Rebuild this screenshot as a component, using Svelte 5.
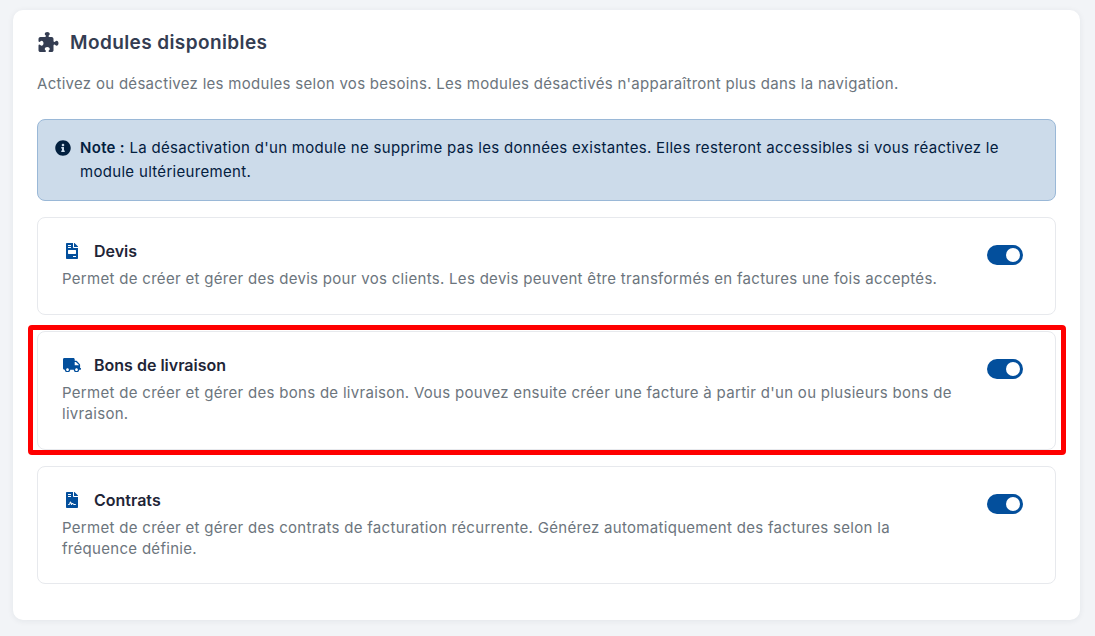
<script lang="ts">
  const modules = [
    {
      title: "Devis",
      desc: "Permet de créer et gérer des devis pour vos clients. Les devis peuvent être transformés en factures une fois acceptés.",
      viewBox: "0 0 384 512",
      path: "M377 105L279.1 7c-4.5-4.5-10.6-7-17-7H256v128h128v-6.1c0-6.3-2.5-12.4-7-16.9zM224 136V0H24C10.7 0 0 10.7 0 24v464c0 13.3 10.7 24 24 24h336c13.3 0 24-10.7 24-24V160H248c-13.2 0-24-10.8-24-24zM64 72c0-4.42 3.58-8 8-8h80c4.42 0 8 3.58 8 8v16c0 4.42-3.58 8-8 8H72c-4.42 0-8-3.58-8-8V72zm0 64c0-4.42 3.58-8 8-8h80c4.42 0 8 3.58 8 8v16c0 4.42-3.58 8-8 8H72c-4.42 0-8-3.58-8-8v-16zm256 304c0 4.42-3.58 8-8 8h-80c-4.42 0-8-3.58-8-8v-16c0-4.42 3.58-8 8-8h80c4.42 0 8 3.58 8 8v16zm0-200v96c0 8.84-7.16 16-16 16H80c-8.84 0-16-7.16-16-16v-96c0-8.84 7.16-16 16-16h224c8.84 0 16 7.16 16 16z",
      highlight: false,
    },
    {
      title: "Bons de livraison",
      desc: "Permet de créer et gérer des bons de livraison. Vous pouvez ensuite créer une facture à partir d'un ou plusieurs bons de livraison.",
      viewBox: "0 0 640 512",
      path: "M624 352h-16V243.9c0-12.7-5.1-24.9-14.1-33.9L494 110.1c-9-9-21.2-14.1-33.9-14.1H416V48c0-26.5-21.5-48-48-48H48C21.5 0 0 21.5 0 48v320c0 26.5 21.5 48 48 48h16c0 53 43 96 96 96s96-43 96-96h128c0 53 43 96 96 96s96-43 96-96h48c8.8 0 16-7.2 16-16v-32c0-8.8-7.2-16-16-16zM160 464c-26.5 0-48-21.5-48-48s21.5-48 48-48 48 21.5 48 48-21.5 48-48 48zm320 0c-26.5 0-48-21.5-48-48s21.5-48 48-48 48 21.5 48 48-21.5 48-48 48zm80-208H416V144h44.1l99.9 99.9V256z",
      highlight: true,
    },
    {
      title: "Contrats",
      desc: "Permet de créer et gérer des contrats de facturation récurrente. Générez automatiquement des factures selon la fréquence définie.",
      viewBox: "0 0 384 512",
      path: "M224 136V0H24C10.7 0 0 10.7 0 24v464c0 13.3 10.7 24 24 24h336c13.3 0 24-10.7 24-24V160H248c-13.2 0-24-10.8-24-24zM64 72c0-4.42 3.58-8 8-8h80c4.42 0 8 3.58 8 8v16c0 4.42-3.58 8-8 8H72c-4.42 0-8-3.58-8-8V72zm0 64c0-4.42 3.58-8 8-8h80c4.42 0 8 3.58 8 8v16c0 4.42-3.58 8-8 8H72c-4.42 0-8-3.58-8-8v-16zm192.81 248H304c8.84 0 16 7.16 16 16s-7.16 16-16 16h-47.19c-16.45 0-31.27-9.14-38.64-23.86-2.95-5.92-8.09-6.52-10.17-6.52s-7.22.59-10.02 6.19l-7.67 15.34a15.986 15.986 0 0 1-14.31 8.84c-.38 0-.75-.02-1.14-.05-6.45-.45-12-4.75-14.03-10.89L144 354.59l-10.61 31.88c-5.89 17.66-22.38 29.53-41 29.53H80c-8.84 0-16-7.16-16-16s7.16-16 16-16h12.39c4.83 0 9.11-3.08 10.64-7.66l18.19-54.64c3.3-9.81 12.44-16.41 22.78-16.41s19.48 6.59 22.77 16.41l13.88 41.64c19.77-16.19 54.05-9.7 66 14.16 2.02 4.06 5.96 6.5 10.16 6.5zM377 105L279.1 7c-4.5-4.5-10.6-7-17-7H256v128h128v-6.1c0-6.3-2.5-12.4-7-16.9z",
      highlight: false,
    },
  ];
</script>

<div class="page">
  <section class="card">
    <h2>
      <svg class="puzzle" viewBox="0 0 512 512" aria-hidden="true"><path d="M192 104.8c0-9.2-5.8-17.3-13.2-22.8C167.2 73.3 160 61.3 160 48c0-26.5 28.7-48 64-48s64 21.5 64 48c0 13.3-7.2 25.3-18.8 34c-7.4 5.5-13.2 13.6-13.2 22.8c0 12.8 10.4 23.2 23.2 23.2H336c26.5 0 48 21.5 48 48v56.8c0 12.8 10.4 23.2 23.2 23.2c9.2 0 17.3-5.8 22.8-13.2c8.7-11.6 20.7-18.8 34-18.8c26.5 0 48 28.7 48 64s-21.5 64-48 64c-13.3 0-25.3-7.2-34-18.8c-5.5-7.4-13.6-13.2-22.8-13.2c-12.8 0-23.2 10.4-23.2 23.2V464c0 26.5-21.5 48-48 48H279.2c-12.8 0-23.2-10.4-23.2-23.2c0-9.2 5.8-17.3 13.2-22.8c11.6-8.7 18.8-20.7 18.8-34c0-26.5-28.7-48-64-48s-64 21.5-64 48c0 13.3 7.2 25.3 18.8 34c7.4 5.5 13.2 13.6 13.2 22.8c0 12.8-10.4 23.2-23.2 23.2H48c-26.5 0-48-21.5-48-48V343.2C0 330.4 10.4 320 23.2 320c9.2 0 17.3 5.8 22.8 13.2C54.7 344.8 66.7 352 80 352c26.5 0 48-28.7 48-64s-21.5-64-48-64c-13.3 0-25.3 7.2-34 18.8C40.5 250.2 32.4 256 23.2 256C10.4 256 0 245.6 0 232.8V176c0-26.5 21.5-48 48-48H168.8c12.8 0 23.2-10.4 23.2-23.2z" /></svg>
      Modules disponibles
    </h2>
    <p class="intro">Activez ou désactivez les modules selon vos besoins. Les modules désactivés n'apparaîtront plus dans la navigation.</p>

    <div class="note">
      <svg class="info" viewBox="0 0 512 512" aria-hidden="true"><path d="M256 8C119.043 8 8 119.083 8 256c0 136.997 111.043 248 248 248s248-111.003 248-248C504 119.083 392.957 8 256 8zm0 110c23.196 0 42 18.804 42 42s-18.804 42-42 42-42-18.804-42-42 18.804-42 42-42zm56 254c0 6.627-5.373 12-12 12h-88c-6.627 0-12-5.373-12-12v-24c0-6.627 5.373-12 12-12h12v-64h-12c-6.627 0-12-5.373-12-12v-24c0-6.627 5.373-12 12-12h64c6.627 0 12 5.373 12 12v100h12c6.627 0 12 5.373 12 12v24z" /></svg>
      <p><strong>Note :</strong> La désactivation d'un module ne supprime pas les données existantes. Elles resteront accessibles si vous réactivez le module ultérieurement.</p>
    </div>

    <div class="modules">
      {#each modules as mod}
        <article class="module" class:highlight={mod.highlight}>
          <div class="module-text">
            <h3>
              <span class="icon-box"><svg class:wide={mod.viewBox === "0 0 640 512"} viewBox={mod.viewBox} aria-hidden="true"><path d={mod.path} /></svg></span>
              {mod.title}
            </h3>
            <p>{mod.desc}</p>
          </div>
          <span class="toggle"><span class="knob"></span></span>
        </article>
      {/each}
    </div>
  </section>
</div>

<style>
  :global(*) { box-sizing: border-box; }
  :global(body) { margin: 0; background: #f2f4f7; font-family: Inter, "Liberation Sans", sans-serif; }

  .page { padding: 10px 15px 16px 13px; height: 636px; overflow: hidden; }
  .card { height: 610px; background: #ffffff; border-radius: 10px; padding: 16px 24px 36px; box-shadow: 0 1px 6px rgba(30, 41, 59, 0.07); }

  h2 { display: flex; align-items: center; gap: 10px; margin: 0; height: 32px; color: #343d52; font-size: 19px; font-weight: 600; letter-spacing: 0.4px; }
  .puzzle { width: 23px; height: 20px; fill: #343d52; }
  .intro { margin: 15px 0 0; height: 22px; color: #6c757d; font-size: 15px; line-height: 22px; letter-spacing: 0.29px; }

  .note { display: flex; gap: 9px; margin-top: 24px; height: 82.4px; padding: 16px 17px; background: #ccdbea; border: 1px solid #9ab8d7; border-radius: 8px; color: #03203f; }
  .info { flex: none; width: 16px; height: 16px; margin-top: 4px; fill: #03203f; }
  .note p { margin: 0; font-size: 15px; line-height: 24px; letter-spacing: 0.31px; }
  strong { font-weight: 600; }

  .modules { display: flex; flex-direction: column; gap: 16px; margin-top: 16px; }
  .module { position: relative; display: flex; justify-content: space-between; gap: 24px; padding: 23px 32px 24px 24px; background: #ffffff; border: 1px solid #e7e9ed; border-radius: 8px; }
  .module.highlight::after { content: ""; position: absolute; inset: -7px -11px -6px -10px; border: 5px solid #ff0000; border-radius: 4px; pointer-events: none; }
  .module-text { flex: 1; min-width: 0; }
  h3 { display: flex; align-items: center; margin: 0 0 8px; height: 20px; color: #1f2537; font-size: 16px; font-weight: 600; }
  .icon-box { display: flex; justify-content: center; align-items: center; width: 20px; margin-right: 12px; }
  .icon-box svg { width: 12px; height: 16px; fill: #034f9c; }
  .icon-box svg.wide { width: 18px; height: 14.4px; }
  .module p { margin: 0; color: #6c757d; font-size: 15px; line-height: 20.8px; letter-spacing: 0.3px; }

  .toggle { flex: none; display: flex; justify-content: flex-end; align-items: center; width: 36px; height: 20px; margin-top: 4px; padding-right: 3px; background: #034f9c; border-radius: 10px; }
  .knob { width: 14px; height: 14px; background: #ffffff; border-radius: 50%; }
</style>
